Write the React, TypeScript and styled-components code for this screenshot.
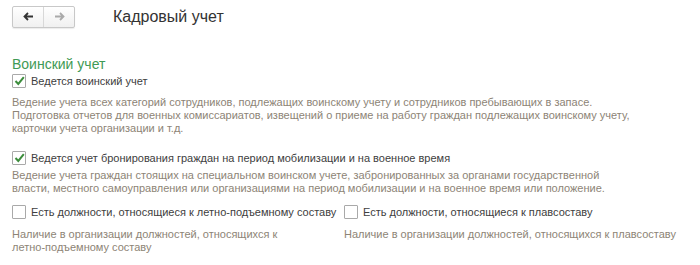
import React from 'react';
import styled, { createGlobalStyle } from 'styled-components';

const Global = createGlobalStyle`
  html, body { margin: 0; padding: 0; background: #fff; }
  body { font-family: Arial, "Liberation Sans", sans-serif; }
`;

const Page = styled.div`
  width: 700px;
  height: 265px;
  padding: 6px 12px 0 12px;
  box-sizing: border-box;
  overflow: hidden;
`;

const Header = styled.div`
  display: flex;
  align-items: center;
  gap: 38px;
  height: 21px;
`;

const NavGroup = styled.div`
  display: flex;
  height: 20px;
  border: 1px solid #c8c8c8;
  border-radius: 2px;
  background: linear-gradient(#ffffff, #f0f0f0);
  box-shadow: 0 1px 1px rgba(0, 0, 0, 0.08);
`;

const NavButton = styled.div<{ $last?: boolean }>`
  width: 30px;
  display: flex;
  align-items: center;
  justify-content: center;
  border-left: ${p => (p.$last ? '1px solid #d8d8d8' : 'none')};
`;

const Title = styled.div`
  font-size: 16px;
  color: #333;
`;

const SectionTitle = styled.div`
  margin-top: 29px;
  font-size: 14px;
  color: #3f9a55;
  line-height: 16px;
`;

const CheckRow = styled.label`
  display: flex;
  align-items: center;
  gap: 5px;
  font-size: 11px;
  color: #404040;
  height: 16px;
`;

const Box = styled.span`
  width: 12px;
  height: 12px;
  border: 1px solid #a9a9a9;
  border-radius: 1px;
  background: #fff;
  display: flex;
  align-items: center;
  justify-content: center;
  flex-shrink: 0;
`;

const Desc = styled.div<{ $top: number }>`
  margin-top: ${p => p.$top}px;
  font-size: 11px;
  line-height: 13px;
  color: #8d8476;
`;

const Block = styled.div<{ $top: number }>`
  margin-top: ${p => p.$top}px;
`;

const Columns = styled.div`
  display: grid;
  grid-template-columns: 332px 1fr;
  margin-top: 9px;
`;

const Arrow = ({ dir, color }: { dir: 'l' | 'r'; color: string }) => (
  <svg width="11" height="9" viewBox="0 0 11 9">
    {dir === 'l' ? (
      <path d="M10 4.5H2M5 1L1.5 4.5L5 8" stroke={color} strokeWidth="1.8" fill="none" />
    ) : (
      <path d="M1 4.5H9M6 1L9.5 4.5L6 8" stroke={color} strokeWidth="1.8" fill="none" />
    )}
  </svg>
);

const Check = ({ checked, children }: { checked?: boolean; children: React.ReactNode }) => (
  <CheckRow>
    <Box>
      {checked && (
        <svg width="11" height="10" viewBox="0 0 11 10">
          <path d="M1.5 5L4.3 8L9.8 1.2" stroke="#3c8d3c" strokeWidth="2" fill="none" />
        </svg>
      )}
    </Box>
    {children}
  </CheckRow>
);

export default function App() {
  return (
    <>
      <Global />
      <Page>
        <Header>
          <NavGroup>
            <NavButton>
              <Arrow dir="l" color="#333" />
            </NavButton>
            <NavButton $last>
              <Arrow dir="r" color="#aaa" />
            </NavButton>
          </NavGroup>
          <Title>Кадровый учет</Title>
        </Header>

        <SectionTitle>Воинский учет</SectionTitle>
        <Block $top={1}>
          <Check checked>Ведется воинский учет</Check>
        </Block>
        <Desc $top={7}>
          Ведение учета всех категорий сотрудников, подлежащих воинскому учету и сотрудников пребывающих в запасе.
          <br />
          Подготовка отчетов для военных комиссариатов, извещений о приеме на работу граждан подлежащих воинскому учету,
          <br />
          карточки учета организации и т.д.
        </Desc>

        <Block $top={15}>
          <Check checked>Ведется учет бронирования граждан на период мобилизации и на военное время</Check>
        </Block>
        <Desc $top={3}>
          Ведение учета граждан стоящих на специальном воинском учете, забронированных за органами государственной
          <br />
          власти, местного самоуправления или организациями на период мобилизации и на военное время или положение.
        </Desc>

        <Columns>
          <div>
            <Check>Есть должности, относящиеся к летно-подъемному составу</Check>
            <Desc $top={8}>
              Наличие в организации должностей, относящихся к
              <br />
              летно-подъемному составу
            </Desc>
          </div>
          <div>
            <Check>Есть должности, относящиеся к плавсоставу</Check>
            <Desc $top={8}>Наличие в организации должностей, относящихся к плавсоставу</Desc>
          </div>
        </Columns>
      </Page>
    </>
  );
}
